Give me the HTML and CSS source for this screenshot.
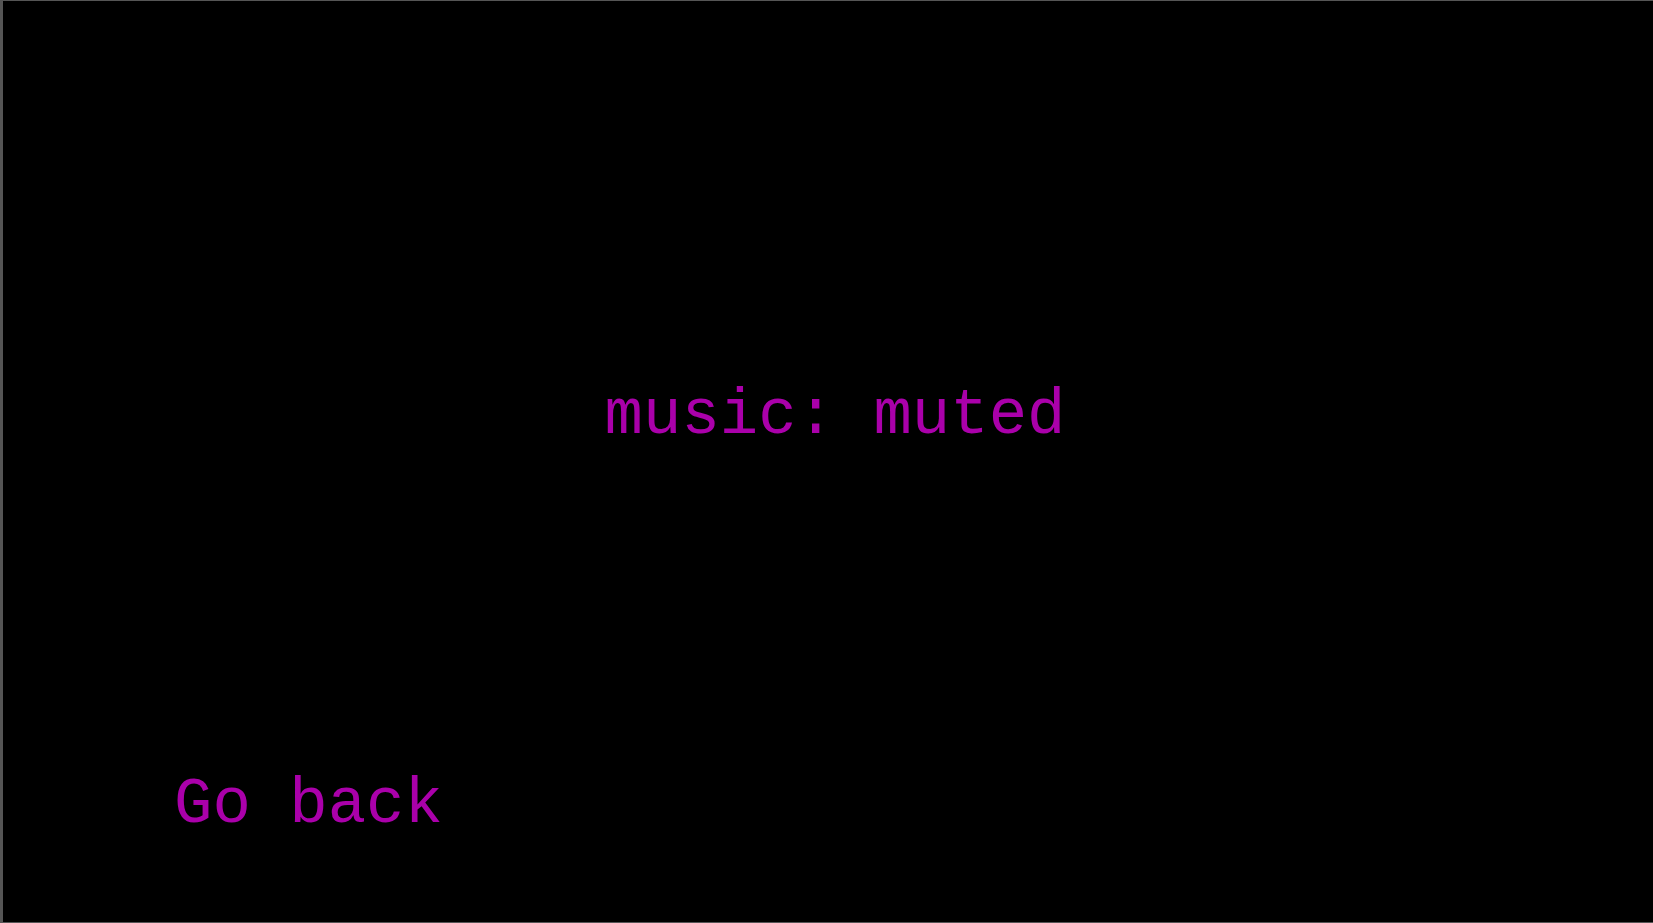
FILE: index.html
```html
<!DOCTYPE html>
<html>
<head>
<meta charset="utf-8">
<link rel="stylesheet" href="styles.css">
</head>
<body>
<div class="screen">
  <div class="setting-row"><span class="setting">music: muted</span></div>
  <div class="back-row"><span class="back">Go back</span></div>
</div>
</body>
</html>
```
FILE: styles.css
```css
html, body {
  margin: 0;
  padding: 0;
  background: #000;
}
.screen {
  box-sizing: border-box;
  width: 1653px;
  height: 923px;
  border-left: 3px solid #555;
  border-top: 1px solid #555;
  border-bottom: 1px solid #555;
  background: #000;
  display: flex;
  flex-direction: column;
  font-family: "Courier New", "Nimbus Mono PS", "Nimbus Mono L", FreeMono, Courier, "Liberation Mono", monospace;
  font-size: 64px;
  line-height: 72px;
  color: #aa00aa;
}
.setting-row {
  margin-top: 379px;
  display: flex;
  justify-content: center;
  padding-left: 14px;
}
.back-row {
  margin-top: 317px;
  padding-left: 171px;
}
```
